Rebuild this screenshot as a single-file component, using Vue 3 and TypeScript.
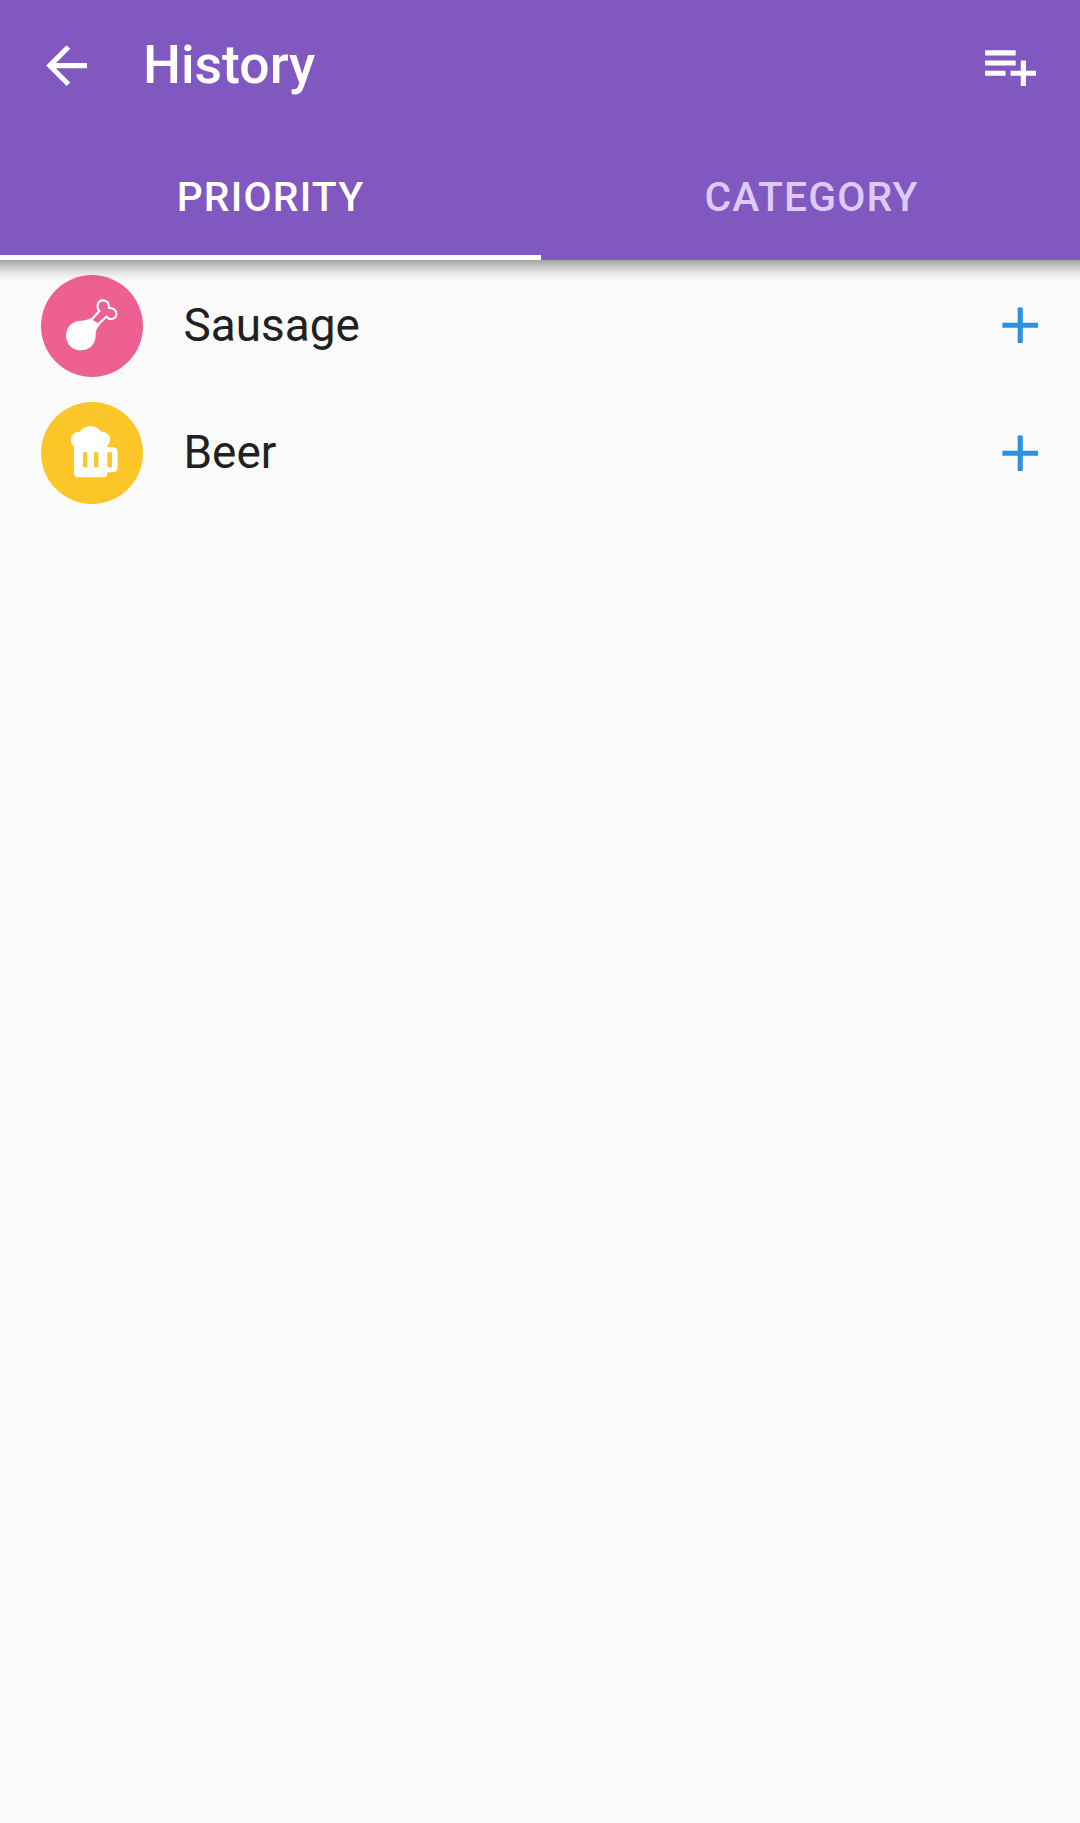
<script setup lang="ts">
import { ref } from 'vue'

interface HistoryItem {
  name: string
  icon: 'drumstick' | 'beer'
}

const tabs: string[] = ['PRIORITY', 'CATEGORY']
const active = ref<number>(0)
const items: HistoryItem[] = [
  { name: 'Sausage', icon: 'drumstick' },
  { name: 'Beer', icon: 'beer' },
]
</script>

<template>
  <div class="screen">
    <header class="bar">
      <div class="toolbar">
        <svg class="icon" viewBox="0 0 24 24"><path d="M20 11H7.83l5.59-5.59L12 4l-8 8 8 8 1.41-1.41L7.83 13H20v-2z" /></svg>
        <h1 class="title">History</h1>
        <svg class="icon" viewBox="0 0 24 24"><path d="M14 10H2v2h12v-2zm0-4H2v2h12V6zm4 8v-4h-2v4h-4v2h4v4h2v-4h4v-2h-4zM2 16h8v-2H2v2z" /></svg>
      </div>
      <nav class="tabs">
        <button
          v-for="(tab, i) in tabs"
          :key="tab"
          class="tab"
          :class="{ active: i === active }"
          @click="active = i"
        >{{ tab }}</button>
      </nav>
    </header>
    <ul class="list">
      <li v-for="item in items" :key="item.name" class="row">
        <span class="avatar" :class="item.icon">
          <svg v-if="item.icon === 'drumstick'" viewBox="33 29 306 306">
            <path
              class="bone"
              d="M181 167L208 137C199 127 201 105 219 105C232 105 238 115 237 128C249 127 259 134 259 145C259 162 240 166 229 154L200 181"
            />
            <path class="solid" d="M181 159C187 163 191 167 197 169C201 173 206 176 210 178C200 189 197 197 197 210C197 237 178 255 153 255C127 255 108 236 108 211C108 186 127 166 152 166C165 166 174 164 181 159Z" />
          </svg>
          <svg v-else viewBox="33 29 306 306">
            <path
              class="solid"
              fill-rule="evenodd"
              d="M132 162C125 156 123 150 123 142C123 128 134 118 149 118C156 108 168 102 181 102C195 102 207 108 213 118C228 117 240 127 240 141C240 149 237 156 232 160V165H248Q263 165 263 180V225Q263 240 248 240H232V243Q232 255 220 255H144Q132 255 132 243ZM159 180V225H172V180ZM192 180V225H205V180ZM232 180V225H246V180Z"
            />
          </svg>
        </span>
        <span class="name">{{ item.name }}</span>
        <svg class="icon add" viewBox="0.14 0.14 24 24"><path d="M19 13h-6v6h-2v-6H5v-2h6V5h2v6h6v2z" /></svg>
      </li>
    </ul>
  </div>
</template>

<style>
body {
  background: #fafafa;
}
</style>

<style scoped>
.screen {
  min-height: 1823px;
  background: #fafafa;
  font-family: Roboto, sans-serif;
}
.bar {
  position: relative;
  height: 260px;
  background: #8058c0;
  color: #fff;
}
.bar::after {
  content: '';
  position: absolute;
  top: 100%;
  left: 0;
  right: 0;
  height: 21px;
  background: linear-gradient(rgba(0, 0, 0, 0.34), rgba(0, 0, 0, 0.24) 25%, rgba(0, 0, 0, 0.1) 55%, rgba(0, 0, 0, 0.03) 80%, transparent);
}
.toolbar {
  display: flex;
  align-items: center;
  height: 131px;
  padding: 0 39px 0 36px;
}
.icon {
  flex: none;
  width: 61.2px;
  height: 61.2px;
  fill: currentColor;
}
.title {
  flex: 1;
  margin: 0 0 2px 45.8px;
  font-size: 53.5px;
  line-height: 62px;
  font-weight: 500;
}
.tabs {
  display: flex;
  height: 129px;
}
.tab {
  flex: none;
  width: 541px;
  padding: 8px 0 0;
  border: 0;
  border-bottom: 5px solid transparent;
  background: none;
  color: #dccaf7;
  font: 500 40.8px/48px Roboto, sans-serif;
  letter-spacing: 1.2px;
}
.tab + .tab {
  width: 539px;
  padding-left: 2px;
}
.tab.active {
  border-bottom-color: #fff;
  color: #fff;
}
.list {
  margin: 0;
  padding: 2px 0 0;
  list-style: none;
}
.row {
  display: flex;
  align-items: center;
  height: 127.5px;
  padding: 0 29px 0 41px;
}
.avatar {
  width: 102px;
  height: 102px;
  border-radius: 50%;
}
.avatar svg {
  display: block;
  width: 102px;
  height: 102px;
}
.drumstick {
  background: #ee6092;
}
.beer {
  background: #fcc629;
}
.solid {
  fill: #fff;
}
.bone {
  fill: none;
  stroke: #fff;
  stroke-width: 6.5;
}
.name {
  flex: 1;
  margin: 0 0 2px 40.5px;
  color: #212121;
  font-size: 45.9px;
  line-height: 54px;
}
.add {
  color: #2c90e0;
}
</style>
